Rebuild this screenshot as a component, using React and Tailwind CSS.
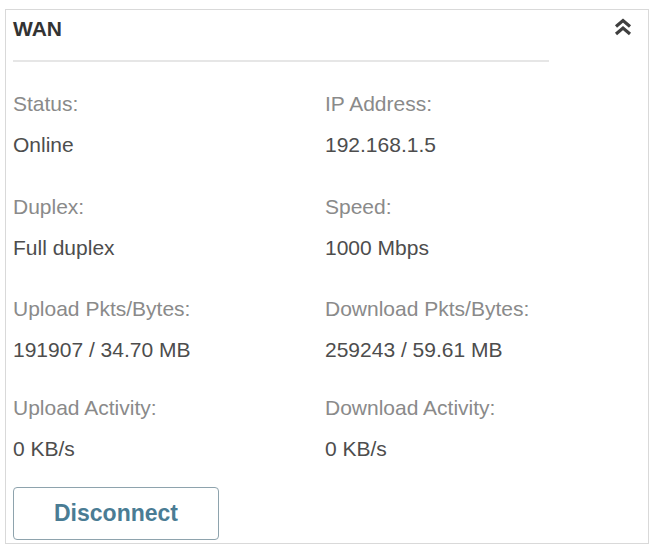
export default function App() {
  const rows = [
    { gap: "mt-[21px]", cells: ["Status:", "Online", "IP Address:", "192.168.1.5"] },
    { gap: "mt-[21px]", cells: ["Duplex:", "Full duplex", "Speed:", "1000 Mbps"] },
    { gap: "mt-[20px]", cells: ["Upload Pkts/Bytes:", "191907 / 34.70 MB", "Download Pkts/Bytes:", "259243 / 59.61 MB"] },
    { gap: "mt-[17px]", cells: ["Upload Activity:", "0 KB/s", "Download Activity:", "0 KB/s"] },
  ];

  return (
    <div
      className="w-[653px] h-[545px] bg-white pt-[9px] pl-[5px] pr-[4px] overflow-hidden"
      style={{ fontFamily: '"Liberation Sans", Arial, sans-serif' }}
    >
      <div className="h-[535px] border border-[#d9d9d9] px-[7px]">
        <div className="flex items-center justify-between h-[36px]">
          <span className="text-[21px] font-bold text-[#333] leading-none">WAN</span>
          <svg width="18" height="20" viewBox="0 0 18 20" className="mr-[9px] mt-[-2px]">
            <polyline points="2,9.5 9,3.5 16,9.5" fill="none" stroke="#3f3f3f" strokeWidth="3.2" />
            <polyline points="2,17 9,11 16,17" fill="none" stroke="#3f3f3f" strokeWidth="3.2" />
          </svg>
        </div>
        <div className="h-[2px] w-[536px] mt-[14px] bg-[#e6e6e6]" />

        <div className="flex flex-col text-[21px] leading-[41px]">
          {rows.map(({ gap, cells: [l1, v1, l2, v2] }) => (
            <div key={l1} className={`grid grid-cols-[312px_1fr] ${gap}`}>
              <div>
                <div className="text-[#8a8a8a]">{l1}</div>
                <div className="text-[#4d4d4d]">{v1}</div>
              </div>
              <div>
                <div className="text-[#8a8a8a]">{l2}</div>
                <div className="text-[#4d4d4d]">{v2}</div>
              </div>
            </div>
          ))}
        </div>

        <button className="mt-[18px] w-[206px] h-[53px] border border-[#8ea3ad] rounded-[4px] text-[23px] font-bold text-[#4a7c94] bg-white">
          Disconnect
        </button>
      </div>
    </div>
  );
}
